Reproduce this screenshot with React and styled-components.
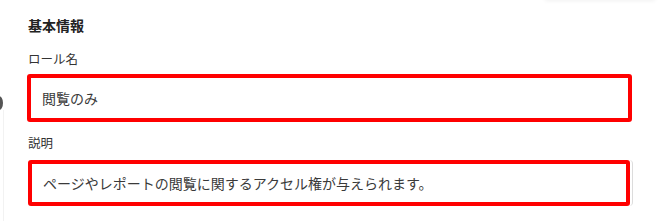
import React from "react";
import styled, { createGlobalStyle } from "styled-components";

const Global = createGlobalStyle`
  html, body { margin: 0; padding: 0; background: #fff; }
  body {
    font-family: "Noto Sans CJK JP", "Noto Sans", sans-serif;
    color: #333;
    width: 661px;
    height: 221px;
    overflow: hidden;
  }
`;

const Page = styled.div`
  position: relative;
  width: 661px;
  height: 221px;
  overflow: hidden;
`;

const TopShadow = styled.div`
  position: absolute;
  top: -10px;
  left: 545px;
  width: 110px;
  height: 10px;
  box-shadow: 0 1px 4px rgba(0, 0, 0, 0.06);
`;

const EdgeDot = styled.div`
  position: absolute;
  left: -5px;
  top: 96px;
  width: 8px;
  height: 14px;
  border-radius: 50%;
  background: #555;
`;

const EdgeLine = styled.div`
  position: absolute;
  left: 3px;
  top: 110px;
  width: 1px;
  height: 111px;
  background: #f2f2f2;
`;

const Section = styled.section`
  display: flex;
  flex-direction: column;
  padding: 15px 0 0 27px;
  width: 606px;
`;

const Title = styled.h2`
  margin: 0 0 0 1px;
  font-size: 14px;
  line-height: 20px;
  font-weight: 700;
  color: #222;
`;

const Label = styled.label`
  display: block;
  margin: ${(p) => p.$top}px 0 0 1px;
  font-size: 12.5px;
  line-height: 18px;
  color: #333;
`;

const Field = styled.div`
  margin-top: ${(p) => p.$top}px;
  width: ${(p) => p.$w}px;
  border-radius: 4px;
  border-right: ${(p) => (p.$ghost ? "1px solid #dcdcdc" : "none")};
  padding-right: ${(p) => (p.$ghost ? "2px" : "0")};
  margin-left: ${(p) => p.$left}px;
`;

const Highlight = styled.div`
  box-sizing: border-box;
  height: ${(p) => p.$h}px;
  border: 4px solid #ff0000;
  border-radius: 3px;
  display: flex;
  align-items: center;
  padding-left: 11px;
  font-size: 14px;
  color: #3a3a3a;
  white-space: nowrap;
`;

export default function App() {
  return (
    <Page>
      <Global />
      <TopShadow />
      <EdgeDot />
      <EdgeLine />
      <Section>
        <Title>基本情報</Title>
        <Label $top={15}>ロール名</Label>
        <Field $top={6} $w={605} $left={0}>
          <Highlight $h={48}>閲覧のみ</Highlight>
        </Field>
        <Label $top={12}>説明</Label>
        <Field $top={8} $w={602} $left={1} $ghost>
          <Highlight $h={46}>ページやレポートの閲覧に関するアクセル権が与えられます。</Highlight>
        </Field>
      </Section>
    </Page>
  );
}
